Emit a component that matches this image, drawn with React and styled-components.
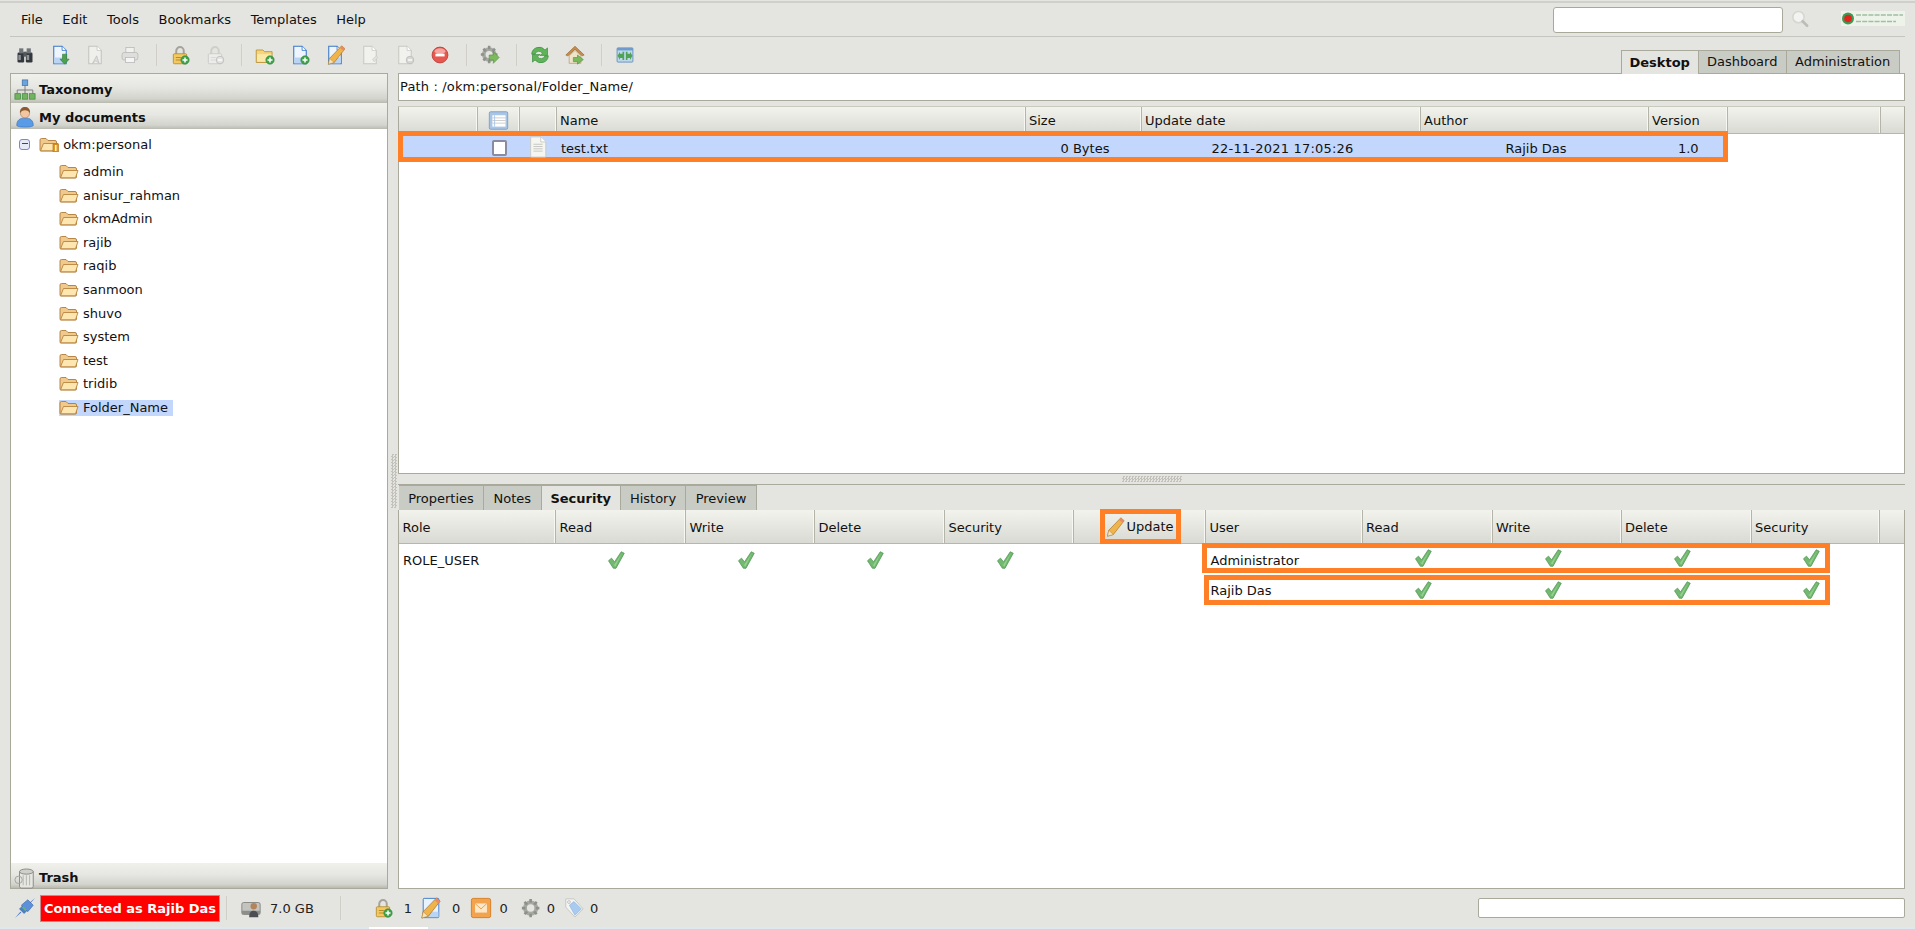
import React from "react";
import styled, { createGlobalStyle } from "styled-components";

const Global = createGlobalStyle`
  * { box-sizing: border-box; }
  html, body { margin: 0; padding: 0; background: #e4e5e0; }
  body { font-family: "DejaVu Sans", Verdana, sans-serif; font-size: 13px; color: #111; }
`;

const Page = styled.div`
  position: relative; width: 1915px; height: 929px; overflow: hidden;
  background: #e4e5e0; display: flex; flex-direction: column;
`;
const TopLine = styled.div`height: 2px; margin-top: 1px; background: #cfcfcb; flex: none;`;
const MenuBar = styled.div`
  flex: none; height: 34px; margin: 0 10px; padding: 0 0 0 11px; display: flex; align-items: center;
  gap: 19.5px; border-bottom: 1px solid #c4c5bf; position: relative; font-size: 13px;
`;
const MenuItem = styled.span`color: #111;`;
const SearchBox = styled.div`
  position: absolute; left: 1543px; top: 4px; width: 230px; height: 26px; background: #fff;
  border: 1px solid #a9a99a; border-radius: 3px;
`;
const SearchIcon = styled.div`position: absolute; left: 1781px; top: 7px; width: 18px; height: 18px;`;
const Logo = styled.div`position: absolute; left: 1831px; top: 8px; width: 64px; height: 15px;`;
const ToolRow = styled.div`flex: none; height: 36px; display: flex; align-items: center; padding-left: 7.5px; position: relative;`;
const ToolBtn = styled.span`width: 35px; height: 24px; display: flex; align-items: center; justify-content: center; flex: none;`;
const ToolSep = styled.span`
  width: 15px; height: 22px; flex: none; display: block; position: relative;
  &::before { content: ""; position: absolute; left: 8px; top: 0; bottom: 0; width: 2px; background: linear-gradient(90deg,#c3c3bb,#f2f2ee); }
`;
const TopTabs = styled.div`display: flex; position: absolute; left: 1620.7px; bottom: -1px; height: 24.5px;`;
const TopTab = styled.div`
  width: ${p => p.$w}px; height: 100%; display: flex; align-items: center; justify-content: center;
  border: 1px solid #a9a99c; border-bottom: ${p => (p.$active ? "none" : "1px solid #a9a99c")}; border-left-width: ${p => (p.$first ? 1 : 0)}px;
  background: ${p => (p.$active ? "#e4e5e0" : "#c9cbc5")};
  font-weight: ${p => (p.$active ? 700 : 400)}; position: relative;
`;
const Main = styled.div`flex: none; height: 816px; display: flex; padding-left: 10px;`;
const Left = styled.div`
  width: 378px; height: 816px; flex: none; display: flex; flex-direction: column;
  border: 1px solid #a9a99c; background: #fff;
`;
const StackHead = styled.div`
  flex: none; height: ${p => p.$h}px; display: flex; align-items: center; gap: 3px; padding: ${p => p.$pt}px 0 0 3px;
  background: linear-gradient(180deg,#f1f1ec 0%,#e6e7e2 45%,#d3d4cd 85%,#b9baaf 100%);
  font-weight: 700; color: #111;
`;
const Tree = styled.div`flex: 1; background: #fff; padding: 3px 0 0 8px; position: relative;`;
const RootRow = styled.div`height: 24px; display: flex; align-items: center; margin-bottom: 3.8px;`;
const Toggle = styled.span`
  width: 11px; height: 11px; border: 1.5px solid #7f86c3; border-radius: 3px; background: #e8e9f6; position: relative; margin-right: 9px; flex: none;
  &::after { content: ""; position: absolute; left: 1.5px; right: 1.5px; top: 3.2px; height: 1.5px; background: #3a3f8f; }
`;
const TreeRow = styled.div`height: 23.6px; display: flex; align-items: center; padding-left: 40px;`;
const TreeLabel = styled.span`
  display: inline-flex; align-items: center; height: 16px; gap: 4px; padding-right: 5px;
  background: ${p => (p.$sel ? "#c2d7fb" : "transparent")};
`;
const VSplit = styled.div`width: 10px; flex: none; position: relative;`;
const VGrip = styled.div`
  position: absolute; left: 3px; top: 381px; width: 6px; height: 54px;
  background: repeating-conic-gradient(#c2c2ba 0 25%, transparent 0 50%) 0 0 / 3px 3px;
`;
const Right = styled.div`width: 1507px; flex: none; display: flex; flex-direction: column;`;
const PathBox = styled.div`
  flex: none; height: 28px; background: #fff; border: 1px solid #a9a99c; display: flex; align-items: center; padding-left: 1px; padding-bottom: 1px;
  letter-spacing: 0.15px;
`;
const FilePanel = styled.div`
  flex: none; height: 368px; margin-top: 5px; background: #fff; border: 1px solid #a9a99c; border-top-color: #c9c9c0; position: relative;
`;
const HeadRow = styled.div`
  display: grid; grid-template-columns: ${p => p.$cols}; height: ${p => p.$h}px;
  background: linear-gradient(180deg,#f3f3ed,#d9dad3); border-bottom: 1px solid #b6b6aa;
`;
const HeadCell = styled.div`
  display: flex; align-items: center; padding-left: ${p => p.$pad ?? 3.5}px; padding-top: ${p => (p.$pad === 0 ? 0 : 2)}px;
  border-right: 1px solid ${p => (p.$soft ? "transparent" : "#b4b4a8")};
  justify-content: ${p => (p.$center ? "center" : "flex-start")}; position: relative; color: #111;
  box-shadow: inset -1px 0 0 ${p => (p.$soft ? "transparent" : "#f7f7f3")};
`;
const FileHeadCell = styled(HeadCell)`padding-top: 0;`;
const FileRow = styled.div`
  position: absolute; left: -1px; top: 24px; width: 1330px; height: 31px; border: 5px solid #fe7f25;
  background: #c2d7fb; display: grid; grid-template-columns: 75px 42px 36.5px 469px 116px 279px 228px 1fr; align-items: center;
`;
const RowCell = styled.div`
  display: flex; align-items: center; justify-content: ${p => (p.$left ? "flex-start" : "center")};
  padding-left: ${p => (p.$left ? "4.5px" : p.$icon ? "0" : `${p.$pl ?? 3}px`)}; padding-top: ${p => (p.$icon ? 0 : 2)}px;
  letter-spacing: ${p => p.$ls ?? 0}px;
`;
const Box = styled.span`width: 15px; height: 16px; border: 2px solid #8a8aa2; border-radius: 2px; background: #fff; display: block; margin-top: 1px;`;
const HSplit = styled.div`flex: none; height: 10px; position: relative;`;
const HGrip = styled.div`
  position: absolute; left: 724px; top: 2px; width: 60px; height: 6px;
  background: repeating-conic-gradient(#c2c2ba 0 25%, transparent 0 50%) 0 0 / 3px 3px;
`;
const Tabs = styled.div`flex: none; height: 26px; display: flex; padding-left: 1px; border-top: 1px solid #a9a99c;`;
const Tab = styled.div`
  height: 100%; width: ${p => p.$w}px; display: flex; align-items: center; justify-content: center;
  background: ${p => (p.$active ? "#e4e5e0" : "#c9cbc5")}; font-weight: ${p => (p.$active ? 700 : 400)};
  border-right: 1px solid #a9a99c; border-top: 1px solid #a9a99c;
`;
const SecPanel = styled.div`flex: 1; background: #fff; border: 1px solid #a9a99c; border-top: 0; position: relative;`;
const UpdateBox = styled.div`
  position: absolute; left: 25.5px; top: -1px; width: 81px; height: 35px; border: 5px solid #fe7f25;
  background: linear-gradient(180deg,#f0f0ea,#dbdcd5); display: flex; align-items: center; padding-left: 0; gap: 2px; z-index: 2; font-size: 13px;
`;
const RoleRow = styled.div`
  position: absolute; left: 0; top: 36px; width: 675px; height: 28px;
  display: grid; grid-template-columns: 207.5px 130px 129px 130px 1fr; align-items: center;
`;
const RoleName = styled.span`padding-left: 4px; padding-top: 1px; color: #111;`;
const UserRow = styled.div`
  position: absolute; left: ${p => p.$x}px; top: ${p => p.$y}px; width: ${p => p.$w}px; height: 30px; border: 5px solid #fe7f25; background: #fff;
  display: grid; grid-template-columns: ${p => p.$first}px 130px 129px 129px 1fr; align-items: center;
`;
const UserName = styled.span`padding-left: ${p => p.$pad}px; padding-top: ${p => p.$top}px;`;
const Status = styled.div`flex: none; height: 40px; position: relative; display: flex; align-items: center; padding-bottom: 2px;`;
const Plug = styled.span`margin-left: 14px; width: 22px; height: 22px; display: block; flex: none;`;
const Connected = styled.div`
  margin-left: 4px; width: 180px; height: 27px; background: #fe0000; border: 1px solid #c98a8a; color: #fff; font-weight: 700;
  display: flex; align-items: center; justify-content: center; flex: none;
`;
const StatusSep = styled.span`
  flex: none; width: 2px; height: 24px; margin-left: ${p => p.$ml}px; background: linear-gradient(90deg,#c3c3bb,#f2f2ee);
`;
const StatusIcon = styled.span`flex: none; margin-left: ${p => p.$ml}px; width: 20px; height: 22px; display: flex; align-items: center; justify-content: center;`;
const StatusText = styled.span`flex: none; margin-left: ${p => p.$ml}px; color: #222;`;
const StatusInput = styled.div`
  position: absolute; left: 1478px; top: 9px; width: 427px; height: 20px; background: #fff; border: 1px solid #a9a99c; border-radius: 2px;
`;
const Strip = styled.div`
  position: absolute; left: 0; right: 0; bottom: 0; height: 2px;
  background: linear-gradient(90deg,#dce9f0 0,#dce9f0 369px,#fff 369px,#fff 428px,#dce9f0 428px);
`;
const Svg = styled.svg`width: ${p => p.$s || 20}px; height: ${p => p.$h || p.$s || 20}px; display: block; flex: none;`;

const I = ({ s, children }) => <Svg $s={s} viewBox="0 0 24 24">{children}</Svg>;
const PlusBadge = ({ c = "#3fa54a" }) => (<g><circle cx="18" cy="18" r="5" fill={c} stroke="#2c7a35" strokeWidth=".7" /><path d="M18 15v6M15 18h6" stroke="#fff" strokeWidth="1.8" /></g>);
const Page2 = ({ stroke, fill, low }) => (<g>
  <path d="M4.5 1.5h10l5 5v16h-15z" fill={fill} stroke={stroke} strokeWidth="1.3" />
  <path d="M14.5 1.5v5h5" fill="#fff" stroke={stroke} strokeWidth="1" />
  {low && <rect x="5.2" y="15" width="13.6" height="7" fill={low} />}
</g>);
const Binoculars = () => <I><rect x="3" y="9" width="8" height="12" rx="1.5" fill="#34383d" /><rect x="13" y="9" width="8" height="12" rx="1.5" fill="#34383d" /><rect x="5" y="4" width="5" height="6" fill="#70757a" /><rect x="14" y="4" width="5" height="6" fill="#70757a" /><rect x="10" y="8" width="4" height="6" fill="#54585c" /><rect x="4" y="12" width="3" height="6" fill="#8d9296" /><rect x="14" y="12" width="3" height="6" fill="#8d9296" /></I>;
const DocDown = () => <I><Page2 stroke="#3a78c6" fill="#eef5ff" low="#b9d4f4" /><path d="M15 11h5v6h3l-5.500 6-5.500-6h3z" fill="#4ea24e" stroke="#2f7a34" strokeWidth=".7" /></I>;
const DocGrayA = () => <I><Page2 stroke="#c5c5c0" fill="#efefec" /><path d="M9 22l5-9 3 9-4-3z" fill="#ddd" stroke="#bbb" strokeWidth=".8" /></I>;
const Printer = () => <I><rect x="7" y="3" width="10" height="7" fill="#f1f1ef" stroke="#bbb" /><rect x="2.500" y="9" width="19" height="9" rx="2.500" fill="#dedfdc" stroke="#b9b9b4" /><rect x="6.500" y="15" width="11" height="6" fill="#f5f5f3" stroke="#bbb" /></I>;
const Lock = ({ plus, gray }) => <I>
  <path d="M7.500 11V7a4.500 4.500 0 019 0v4" fill="none" stroke={gray ? "#cfcfca" : "#a8a39a"} strokeWidth="2.400" />
  <rect x="4" y="10.500" width="16" height="12" rx="1.200" fill={gray ? "#ececea" : "#f3c95f"} stroke={gray ? "#c8c8c3" : "#b58a2c"} />
  <path d="M7 15h6M7 18h6" stroke={gray ? "#d5d5d0" : "#a77f24"} />
  {plus ? <PlusBadge /> : <g><circle cx="18" cy="18" r="4.500" fill="#e3e3e0" stroke="#bbb" /><path d="M15.500 18h5" stroke="#fff" strokeWidth="1.600" /></g>}
</I>;
const FolderAdd = () => <I><path d="M1.500 6h8l2 2h9v13h-19z" fill="#f5d578" stroke="#b68f33" /><path d="M2.500 11h17v9h-17z" fill="#fbe8a8" /><PlusBadge /></I>;
const DocAdd = () => <I><Page2 stroke="#3a78c6" fill="#eef5ff" low="#b9d4f4" /><PlusBadge /></I>;
const Pencil = ({ x = 0 }) => <g transform={`translate(${x} 0)`}><path d="M19 1l4 3.500L10 21l-7 2 1.500-7z" fill="#f0b54a" stroke="#a8742a" strokeWidth=".8" /><path d="M19 1l4 3.500-2 2.500-4-3.500z" fill="#e98a6a" /><path d="M4.500 16L3 23l7-2z" fill="#f5e2bf" stroke="#a8742a" strokeWidth=".5" /></g>;
const DocEdit = () => <I><Page2 stroke="#3a78c6" fill="#eef5ff" low="#b9d4f4" /><Pencil x={1} /></I>;
const DocGray = ({ minus }) => <I><Page2 stroke="#c9c9c4" fill="#f1f1ee" />{minus ? <g><circle cx="18" cy="18" r="4.500" fill="#d7d7d3" stroke="#bbb" /><path d="M15.500 18h5" stroke="#fff" strokeWidth="1.600" /></g> : <path d="M15 17l5-4 1 2-4 5z" fill="#e3e3df" stroke="#c5c5c0" strokeWidth=".7" />}</I>;
const Stop = () => <I><circle cx="12" cy="12" r="9.500" fill="#e8574f" stroke="#b63a33" /><ellipse cx="12" cy="7.500" rx="6.500" ry="3.500" fill="#f4a7a1" /><rect x="6.500" y="10.500" width="11" height="3.200" fill="#fff" /></I>;
const GearShape = ({ f, st }) => <g><circle cx="11" cy="11.500" r="6.500" fill="none" stroke={f} strokeWidth="4.500" /><path d="M11 1v4M11 18v4M1 11.500h4M17 11.500h4M4 4.500l3 3M15 15.500l3 3M18 4.500l-3 3M7 15.500l-3 3" stroke={st} strokeWidth="3" /></g>;
const GearArrow = () => <I><GearShape f="#a7a9a3" st="#8e908a" /><path d="M11 12h5V8l7 7-7 7v-4h-5z" fill="#7cba5c" stroke="#4d8f3a" strokeWidth=".7" /></I>;
const Refresh = () => <I><path d="M2 11a9 9 0 0116-5l3-2.500v9h-9l3-2.500A5 5 0 006 11z" fill="#5fb45a" stroke="#3a8a3b" strokeWidth=".8" /><path d="M22 13a9 9 0 01-16 5l-3 2.500v-9h9l-3 2.500A5 5 0 0018 13z" fill="#5fb45a" stroke="#3a8a3b" strokeWidth=".8" /></I>;
const Home = () => <I><path d="M12 1.500L1 12l2.500 1L12 5l8.500 8 2.500-1z" fill="#c98d4c" stroke="#8d5c28" strokeWidth=".7" /><path d="M5 13l7-6.500 7 6.500v9H5z" fill="#efe3c8" stroke="#a68a5c" strokeWidth=".7" /><path d="M10 15h5v-3l7 5.500-7 5.500v-3h-5z" fill="#77b95b" stroke="#4d8f3a" strokeWidth=".7" /></I>;
const SplitBlue = () => <I><rect x="2.500" y="3.500" width="19" height="17" rx="1" fill="#bcd9ee" stroke="#5c86b6" /><rect x="2.500" y="3.500" width="19" height="3" fill="#6f9bcb" /><path d="M11 8v10H9v-2.500H6V18l-3-5 3-5v2.500h3V8zM13 8v10h2v-2.500h3V18l3-5-3-5v2.500h-3V8z" fill="#51a354" /></I>;
const ListBtn = () => <I s={21}><rect x="1.500" y="2" width="21" height="20" rx="1.500" fill="#a9c5e6" stroke="#7d9cc4" /><rect x="5" y="6" width="15" height="13" fill="#fff" /><path d="M5 9h15M5 12h15M5 15h15" stroke="#c8c8c8" /><path d="M7.500 6v13" stroke="#a9c5e6" /></I>;
const Taxonomy = () => <I s={22}><rect x="9" y="1" width="6" height="6" fill="#6ea4dc" stroke="#3a70ac" strokeWidth=".8" /><path d="M12 7v5M3.500 16v-4h17v4M12 12v4" fill="none" stroke="#777" /><rect x="1" y="16" width="6" height="6" fill="#73b35f" stroke="#3f8a3c" strokeWidth=".8" /><rect x="9" y="16" width="6" height="6" fill="#73b35f" stroke="#3f8a3c" strokeWidth=".8" /><rect x="17" y="16" width="6" height="6" fill="#73b35f" stroke="#3f8a3c" strokeWidth=".8" /></I>;
const Person = () => <I s={22}><path d="M3 21c0-5 3-8 9-8s9 3 9 8c0 1-2 2-9 2s-9-1-9-2z" fill="#5a9be8" stroke="#3a6fb5" strokeWidth=".7" /><circle cx="12" cy="8" r="5" fill="#f1c6a0" stroke="#a76a3e" strokeWidth=".6" /><path d="M6.500 8C6 3 9 1 12 1s6 2 5.500 7c-1-2.500-3-3.500-5.500-3.500S7.500 5.500 6.500 8z" fill="#8a5a30" /></I>;
const TrashIcon = () => <I s={22}><path d="M6 5h15v16a2 2 0 01-2 2H8a2 2 0 01-2-2z" fill="#e6e7e3" stroke="#85857f" /><ellipse cx="13.500" cy="5" rx="7.500" ry="2.800" fill="#cfd0cb" stroke="#85857f" /><path d="M10 9v11M13.500 9v11M17 9v11" stroke="#b1b1ab" /><circle cx="5" cy="14" r="4" fill="none" stroke="#a0a09a" /></I>;
const Folder = ({ bin }) => <Svg $s={20} $h={15} viewBox="0 0 20 15"><path d="M1 3q0-1.500 1.500-1.500h4.500l2 2h7q1.500 0 1.500 1.500v8q0 1-1 1H2q-1 0-1-1z" fill="#f0c98c" stroke="#b07a38" strokeWidth=".9" /><path d="M1.500 13.800L4.500 6.500H19l-2.500 7.300z" fill="#fde6b0" stroke="#b9843f" strokeWidth=".9" />{bin && <g><rect x="14" y="7" width="5.500" height="8" fill="#e79a1f" stroke="#a86a10" strokeWidth=".6" /><rect x="16" y="8" width="1.500" height="6" fill="#fff2cc" /></g>}</Svg>;
const Check = () => <Svg $s={18} viewBox="0 0 24 24"><path d="M2 13l4-3.500 4 5L19 1l4 2-11 20h-3.500z" fill="#72b86f" stroke="#4d9553" strokeWidth="1" /><path d="M4.500 12.500l5 6L20 3l-9 18z" fill="#96d18f" /></Svg>;
const DocPlain = () => <Svg $s={22} viewBox="0 0 24 24"><path d="M4 1h11l5.500 5.500V23H4z" fill="#f5f5f2" stroke="#c9c9c3" /><path d="M7 9h10M7 11.500h10M7 14h10M7 16.500h10" stroke="#c4c4bd" /><path d="M15 1v5.500h5.500" fill="#fff" stroke="#c9c9c3" /></Svg>;
const Magnifier = () => <Svg $s={18} viewBox="0 0 24 24"><circle cx="10" cy="9.500" r="7.500" fill="#f3f3f1" stroke="#d5d5d1" strokeWidth="2" /><path d="M15.500 15l6 6" stroke="#bdbdb8" strokeWidth="3.500" strokeLinecap="round" /></Svg>;
const LogoArt = () => <Svg $s={64} $h={15} viewBox="0 0 64 15"><rect width="64" height="15" fill="#eef3ea" /><circle cx="7" cy="7.500" r="6" fill="#3f9a57" /><circle cx="7" cy="7.500" r="3.800" fill="#e2241c" /><path d="M15 4h47M15 10.500h40" stroke="#9dbfa2" strokeWidth="1.300" strokeDasharray="5 1.200" /></Svg>;
const PlugIcon = () => <Svg $s={22} viewBox="0 0 24 24"><path d="M1 23l6-7 1 1zM23 1l-6 7-1-1z" fill="#4a78c8" /><path d="M6 13l5-5 5 5-5 5z" fill="#4a7fd0" stroke="#2f5ba5" strokeWidth=".6" /><path d="M8 9l7-6 6 6-6 7z" fill="#5d90dc" stroke="#2f5ba5" strokeWidth=".6" /><path d="M8.500 11.500l4 4 1.500-1.500-4-4z" fill="#67b564" /></Svg>;
const DiskIcon = () => <I s={22}><rect x="2" y="6" width="20" height="13" rx="2" fill="#c3c4c0" stroke="#84857f" /><rect x="2" y="15" width="20" height="4" fill="#8d8e88" /><circle cx="15" cy="10" r="3.500" fill="#b5835a" /><path d="M10 22c0-5 2-7 5-7s5 2 5 7z" fill="#4a4d54" /></I>;
const EditPad = () => <I s={22}><rect x="3.500" y="1.500" width="17" height="21" rx="1" fill="#e9f2ff" stroke="#3a78c6" /><rect x="4" y="16" width="16" height="6" fill="#b9d4f4" /><Pencil x={-1} /></I>;
const MailIcon = () => <I s={22}><rect x="1.500" y="1.500" width="21" height="21" rx="2" fill="#f3a24d" stroke="#d67d20" /><rect x="5.500" y="7" width="13" height="10" fill="#fde7c9" /><path d="M5.500 7l6.500 6 6.500-6" fill="none" stroke="#e89a4a" /></I>;
const GearPlain = () => <I s={21}><GearShape f="#a7a9a3" st="#8e908a" /></I>;
const TagIcon = () => <I s={22}><path d="M3 2h9l10 11-9 9L3 11z" fill="#f4f4f2" stroke="#c5c5c0" /><path d="M7 9l5-4 8 8-7 7z" fill="#a9cbef" stroke="#83abd9" strokeWidth=".6" /><circle cx="6.500" cy="5.500" r="1.500" fill="#fff" stroke="#bbb" /></I>;
const PencilIcon = () => <Svg $s={20} viewBox="0 0 24 24"><Pencil /></Svg>;

const toolbar = [
  [<Binoculars />, <DocDown />, <DocGrayA />, <Printer />],
  [<Lock plus />, <Lock gray />],
  [<FolderAdd />, <DocAdd />, <DocEdit />, <DocGray />, <DocGray minus />, <Stop />],
  [<GearArrow />],
  [<Refresh />, <Home />],
  [<SplitBlue />],
];
const children = ["admin", "anisur_rahman", "okmAdmin", "rajib", "raqib", "sanmoon", "shuvo", "system", "test", "tridib", "Folder_Name"];
const fileCols = "79px 42px 36.5px 469px 116px 279px 228px 79px 153px 1fr";
const secCols = "157px 130px 129px 130px 129px 132px 156.5px 130px 129px 130px 128px 1fr";

export default function App() {
  return (
    <Page>
      <Global />
      <TopLine />
      <MenuBar>
        {["File", "Edit", "Tools", "Bookmarks", "Templates", "Help"].map(m => <MenuItem key={m}>{m}</MenuItem>)}
        <SearchBox />
        <SearchIcon><Magnifier /></SearchIcon>
        <Logo><LogoArt /></Logo>
      </MenuBar>
      <ToolRow>
        {toolbar.map((g, i) => (
          <React.Fragment key={i}>
            {i > 0 && <ToolSep />}
            {g.map((ic, j) => <ToolBtn key={j}>{ic}</ToolBtn>)}
          </React.Fragment>
        ))}
        <TopTabs>
          <TopTab $active $first $w={78}>Desktop</TopTab>
          <TopTab $w={88}>Dashboard</TopTab>
          <TopTab $w={113}>Administration</TopTab>
        </TopTabs>
      </ToolRow>
      <Main>
        <Left>
          <StackHead $h={29} $pt={2}><Taxonomy />Taxonomy</StackHead>
          <StackHead $h={26} $pt={2}><Person />My documents</StackHead>
          <Tree>
            <RootRow><Toggle /><Folder bin /><TreeLabel>&nbsp;okm:personal</TreeLabel></RootRow>
            {children.map(c => (
              <TreeRow key={c}>
                <TreeLabel $sel={c === "Folder_Name"}><Folder />{c}</TreeLabel>
              </TreeRow>
            ))}
          </Tree>
          <StackHead $h={25} $pt={4}><TrashIcon />Trash</StackHead>
        </Left>
        <VSplit><VGrip /></VSplit>
        <Right>
          <PathBox>Path : /okm:personal/Folder_Name/</PathBox>
          <FilePanel>
            <HeadRow $cols={fileCols} $h={27}>
              <FileHeadCell />
              <FileHeadCell $center $pad={0}><ListBtn /></FileHeadCell>
              <FileHeadCell />
              <FileHeadCell>Name</FileHeadCell>
              <FileHeadCell>Size</FileHeadCell>
              <FileHeadCell>Update date</FileHeadCell>
              <FileHeadCell>Author</FileHeadCell>
              <FileHeadCell>Version</FileHeadCell>
              <FileHeadCell />
              <FileHeadCell $soft />
            </HeadRow>
            <FileRow>
              <RowCell />
              <RowCell $icon><Box /></RowCell>
              <RowCell $icon><DocPlain /></RowCell>
              <RowCell $left>test.txt</RowCell>
              <RowCell>0 Bytes</RowCell>
              <RowCell $ls={0.2}>22-11-2021 17:05:26</RowCell>
              <RowCell>Rajib Das</RowCell>
              <RowCell $pl={5}>1.0</RowCell>
            </FileRow>
          </FilePanel>
          <HSplit><HGrip /></HSplit>
          <Tabs>
            <Tab $w={85}>Properties</Tab>
            <Tab $w={57.5}>Notes</Tab>
            <Tab $w={79.5} $active>Security</Tab>
            <Tab $w={65}>History</Tab>
            <Tab $w={71}>Preview</Tab>
          </Tabs>
          <SecPanel>
            <HeadRow $cols={secCols} $h={34}>
              <HeadCell>Role</HeadCell>
              <HeadCell>Read</HeadCell>
              <HeadCell>Write</HeadCell>
              <HeadCell>Delete</HeadCell>
              <HeadCell>Security</HeadCell>
              <HeadCell $pad={0}><UpdateBox><PencilIcon />Update</UpdateBox></HeadCell>
              <HeadCell>User</HeadCell>
              <HeadCell>Read</HeadCell>
              <HeadCell>Write</HeadCell>
              <HeadCell>Delete</HeadCell>
              <HeadCell>Security</HeadCell>
              <HeadCell $soft />
            </HeadRow>
            <RoleRow>
              <RoleName>ROLE_USER</RoleName>
              <Check /><Check /><Check /><Check />
            </RoleRow>
            <UserRow $x={803} $y={33} $w={628} $first={207}>
              <UserName $pad={3.5} $top={4}>Administrator</UserName>
              <Check /><Check /><Check /><Check />
            </UserRow>
            <UserRow $x={804.5} $y={65} $w={626.5} $first={205.5}>
              <UserName $pad={2} $top={1}>Rajib Das</UserName>
              <Check /><Check /><Check /><Check />
            </UserRow>
          </SecPanel>
        </Right>
      </Main>
      <Status>
        <Plug><PlugIcon /></Plug>
        <Connected>Connected as Rajib Das</Connected>
        <StatusSep $ml={6} />
        <StatusIcon $ml={13}><DiskIcon /></StatusIcon>
        <StatusText $ml={9}>7.0 GB</StatusText>
        <StatusSep $ml={26} />
        <StatusIcon $ml={31}><Lock plus /></StatusIcon>
        <StatusText $ml={11}>1</StatusText>
        <StatusIcon $ml={9}><EditPad /></StatusIcon>
        <StatusText $ml={11}>0</StatusText>
        <StatusIcon $ml={11}><MailIcon /></StatusIcon>
        <StatusText $ml={8}>0</StatusText>
        <StatusIcon $ml={14}><GearPlain /></StatusIcon>
        <StatusText $ml={5}>0</StatusText>
        <StatusIcon $ml={9}><TagIcon /></StatusIcon>
        <StatusText $ml={6}>0</StatusText>
        <StatusInput />
        <Strip />
      </Status>
    </Page>
  );
}
